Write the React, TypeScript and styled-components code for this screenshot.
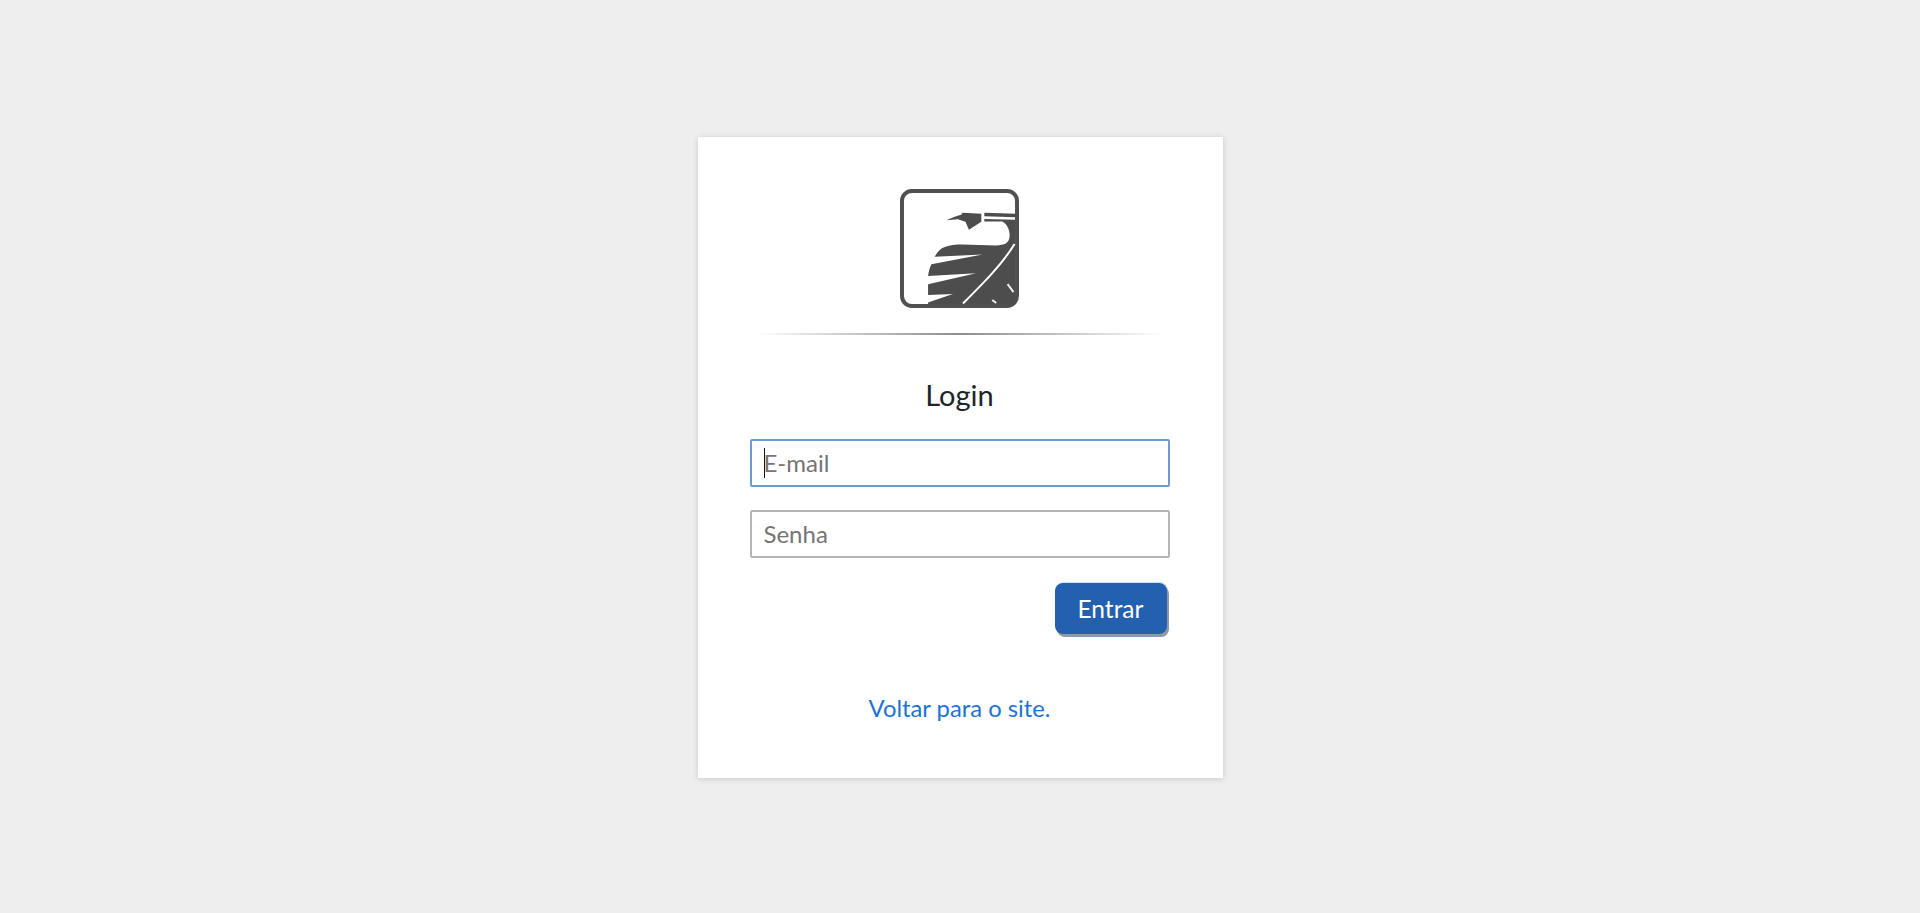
import styled, { createGlobalStyle } from 'styled-components';

const GlobalStyle = createGlobalStyle`
  * {
    box-sizing: border-box;
  }

  body {
    margin: 0;
    font-family: 'Lato', 'Liberation Sans', sans-serif;
    background-color: #eeeeee;
  }
`;

function Logo() {
  return (
    <LogoImage viewBox="0 0 120 120" aria-label="Logo">
      <rect x="2" y="2" width="116" height="116" rx="10" fill="#fff" stroke="#505050" strokeWidth="4" />
      <path
        fill="#4d4d4d"
        d="M47 31.5 C52 29 57 27 61.7 26 L63 24 L82 25 L82 33 L69.5 41 L66 33 L58.3 30.5 Z"
      />
      <path fill="#4d4d4d" d="M85 24 L117 25 L117 28.5 L85 27.5 Z" />
      <path
        fill="#4d4d4d"
        d="M35 68.3 C38 63 41 60.5 43.3 59.3 C50 56.5 56 56 63.3 56 L96.7 57 C106 57 110 54 110.5 48 C111 43 109 36 103.3 32.7 L85 32.7 L85 30.3 L116 31 L116 116 L28.3 116 L28.3 114.5 L53.3 106 L28.3 107 L28.3 96 L76.7 85 L28.3 87.7 C29 83 30 79 31.7 76 L83.3 66 Z"
      />
      <path d="M63.5 115.5 C85 94 103 76 115.5 55.5" fill="none" stroke="#fff" strokeWidth="2" />
      <path d="M108.5 96 L114.5 104" fill="none" stroke="#f0f0f0" strokeWidth="2" />
      <path d="M93 112 L97 115" fill="none" stroke="#f0f0f0" strokeWidth="2" />
    </LogoImage>
  );
}

export default function App() {
  return (
    <Page>
      <GlobalStyle />
      <Card>
        <Logo />
        <Divider />
        <Title>Login</Title>
        <LoginForm onSubmit={(e) => e.preventDefault()}>
          <InputWrapper>
            <Input type="email" placeholder="E-mail" $focused />
            <Caret />
          </InputWrapper>
          <InputWrapper>
            <Input type="password" placeholder="Senha" />
          </InputWrapper>
          <Actions>
            <SubmitButton type="submit">Entrar</SubmitButton>
          </Actions>
        </LoginForm>
        <BackLink href="#">Voltar para o site.</BackLink>
      </Card>
    </Page>
  );
}

const Page = styled.div`
  display: flex;
  align-items: flex-start;
  justify-content: center;
  min-height: 100vh;
  padding-top: 137px;
`;

const Card = styled.div`
  display: flex;
  flex-direction: column;
  align-items: center;
  width: 525px;
  height: 641px;
  padding: 52px 53px 0 52px;
  background-color: #fff;
  box-shadow: 0 1px 6px rgba(0, 0, 0, 0.16);
`;

const LogoImage = styled.svg`
  display: block;
  flex: none;
  width: 119px;
  height: 119px;
`;

const Divider = styled.div`
  flex: none;
  width: 410px;
  height: 2px;
  margin-top: 25px;
  background: linear-gradient(to right, rgba(130, 130, 130, 0), #8c8c8c 50%, rgba(130, 130, 130, 0));
`;

const Title = styled.h2`
  margin: 40px 0 0;
  font-size: 29px;
  font-weight: 400;
  line-height: 40px;
  color: #212529;
`;

const LoginForm = styled.form`
  display: flex;
  flex-direction: column;
  gap: 23px;
  width: 100%;
  margin-top: 24px;
`;

const InputWrapper = styled.div`
  position: relative;
  width: 100%;
`;

const Input = styled.input<{ $focused?: boolean }>`
  display: block;
  width: 100%;
  height: 48px;
  padding: 0 12px 2px;
  font-family: inherit;
  font-size: 24px;
  color: #333;
  background-color: #fff;
  border: 2px solid ${({ $focused }) => ($focused ? '#7099d8' : '#b5b5b5')};
  border-radius: 2px;
  outline: none;

  &::placeholder {
    color: #757575;
    opacity: 1;
  }
`;

const Caret = styled.span`
  position: absolute;
  top: 9px;
  left: 14px;
  width: 1px;
  height: 30px;
  background-color: #111;
`;

const Actions = styled.div`
  display: flex;
  justify-content: flex-end;
  padding-right: 3px;
  margin-top: 2px;
`;

const SubmitButton = styled.button`
  width: 112px;
  height: 51px;
  padding: 0;
  font-family: inherit;
  font-size: 24.5px;
  color: #fff;
  background-color: #2361b0;
  border: none;
  border-radius: 8px;
  box-shadow: 2px 3px 0 #8f98aa, 1px -1px 0 #d5e2f3;
  cursor: pointer;
`;

const BackLink = styled.a`
  margin-top: 56px;
  font-size: 23.8px;
  line-height: 36px;
  color: #1b74d3;
  text-decoration: none;
`;
